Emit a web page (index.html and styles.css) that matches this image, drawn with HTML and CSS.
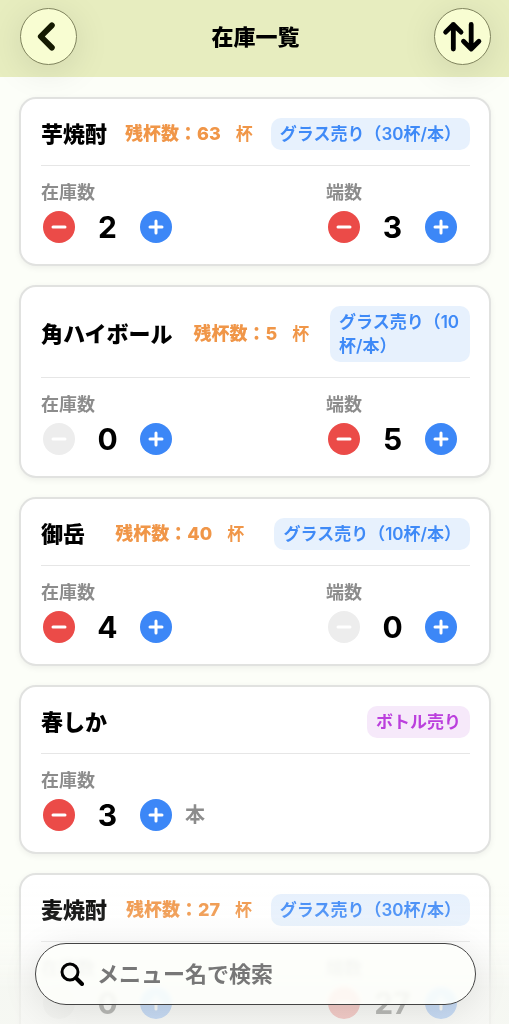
FILE: index.html
```html
<!DOCTYPE html>
<html lang="ja">
<head>
<meta charset="utf-8">
<meta name="viewport" content="width=device-width, initial-scale=1">
<title>在庫一覧</title>
<link rel="stylesheet" href="styles.css">
</head>
<body>
<svg class="sprite" aria-hidden="true">
  <symbol id="minus" viewBox="0 0 32 32"><path d="M10 16h12" fill="none" stroke="#fff" stroke-width="3" stroke-linecap="round"/></symbol>
  <symbol id="plus" viewBox="0 0 32 32"><path d="M10 16h12M16 10v12" fill="none" stroke="#fff" stroke-width="3" stroke-linecap="round"/></symbol>
</svg>
<div class="app">
  <header class="topbar">
    <button class="round" type="button" aria-label="戻る">
      <svg viewBox="0 0 57 57"><path d="M32 17 20.500 28.500 32 40" fill="none" stroke="#151a02" stroke-width="6" stroke-linecap="round" stroke-linejoin="round"/></svg>
    </button>
    <h1 class="title">在庫一覧</h1>
    <button class="round" type="button" aria-label="並べ替え">
      <svg viewBox="0 0 57 57" fill="none" stroke="#000" stroke-width="5" stroke-linecap="round" stroke-linejoin="round"><path d="M19 41.500V16M11 24l8-8 8 8M37.500 16v25.500M29.500 33.500l8 8 8-8"/></svg>
    </button>
  </header>

  <main class="list">
    <article class="card">
      <div class="card-head">
        <h2 class="name">芋焼酎</h2>
        <p class="remain"><strong>残杯数：63</strong><span>杯</span></p>
        <span class="badge">グラス売り（30杯/本）</span>
      </div>
      <div class="counts">
        <section class="count"><h3 class="label">在庫数</h3><div class="stepper">
          <button class="step minus" type="button" aria-label="在庫数を減らす"><svg><use href="#minus"/></svg></button><output class="num">2</output><button class="step plus" type="button" aria-label="在庫数を増やす"><svg><use href="#plus"/></svg></button></div></section>
        <section class="count"><h3 class="label">端数</h3><div class="stepper">
          <button class="step minus" type="button" aria-label="端数を減らす"><svg><use href="#minus"/></svg></button><output class="num">3</output><button class="step plus" type="button" aria-label="端数を増やす"><svg><use href="#plus"/></svg></button></div></section>
      </div>
    </article>

    <article class="card">
      <div class="card-head">
        <h2 class="name">角ハイボール</h2>
        <p class="remain"><strong>残杯数：5</strong><span>杯</span></p>
        <span class="badge badge-wrap">グラス売り（10杯/本）</span>
      </div>
      <div class="counts">
        <section class="count"><h3 class="label">在庫数</h3><div class="stepper">
          <button class="step minus" type="button" aria-label="在庫数を減らす" disabled><svg><use href="#minus"/></svg></button><output class="num">0</output><button class="step plus" type="button" aria-label="在庫数を増やす"><svg><use href="#plus"/></svg></button></div></section>
        <section class="count"><h3 class="label">端数</h3><div class="stepper">
          <button class="step minus" type="button" aria-label="端数を減らす"><svg><use href="#minus"/></svg></button><output class="num">5</output><button class="step plus" type="button" aria-label="端数を増やす"><svg><use href="#plus"/></svg></button></div></section>
      </div>
    </article>

    <article class="card">
      <div class="card-head">
        <h2 class="name">御岳</h2>
        <p class="remain"><strong>残杯数：40</strong><span>杯</span></p>
        <span class="badge">グラス売り（10杯/本）</span>
      </div>
      <div class="counts">
        <section class="count"><h3 class="label">在庫数</h3><div class="stepper">
          <button class="step minus" type="button" aria-label="在庫数を減らす"><svg><use href="#minus"/></svg></button><output class="num">4</output><button class="step plus" type="button" aria-label="在庫数を増やす"><svg><use href="#plus"/></svg></button></div></section>
        <section class="count"><h3 class="label">端数</h3><div class="stepper">
          <button class="step minus" type="button" aria-label="端数を減らす" disabled><svg><use href="#minus"/></svg></button><output class="num">0</output><button class="step plus" type="button" aria-label="端数を増やす"><svg><use href="#plus"/></svg></button></div></section>
      </div>
    </article>

    <article class="card">
      <div class="card-head">
        <h2 class="name">春しか</h2>
        <span class="badge badge-bottle">ボトル売り</span>
      </div>
      <div class="counts">
        <section class="count"><h3 class="label">在庫数</h3><div class="stepper">
          <button class="step minus" type="button" aria-label="在庫数を減らす"><svg><use href="#minus"/></svg></button><output class="num">3</output><button class="step plus" type="button" aria-label="在庫数を増やす"><svg><use href="#plus"/></svg></button><span class="unit">本</span></div></section>
      </div>
    </article>

    <article class="card">
      <div class="card-head">
        <h2 class="name">麦焼酎</h2>
        <p class="remain"><strong>残杯数：27</strong><span>杯</span></p>
        <span class="badge">グラス売り（30杯/本）</span>
      </div>
      <div class="counts">
        <section class="count"><h3 class="label">在庫数</h3><div class="stepper">
          <button class="step minus" type="button" aria-label="在庫数を減らす" disabled><svg><use href="#minus"/></svg></button><output class="num">0</output><button class="step plus" type="button" aria-label="在庫数を増やす"><svg><use href="#plus"/></svg></button></div></section>
        <section class="count"><h3 class="label">端数</h3><div class="stepper">
          <button class="step minus" type="button" aria-label="端数を減らす"><svg><use href="#minus"/></svg></button><output class="num">27</output><button class="step plus" type="button" aria-label="端数を増やす"><svg><use href="#plus"/></svg></button></div></section>
      </div>
    </article>
  </main>

  <div class="dock">
    <form class="search" role="search">
      <svg class="search-icon" viewBox="0 0 24 24" aria-hidden="true"><circle cx="10" cy="10" r="8" fill="none" stroke="#000" stroke-width="3"/><path d="m16 16 6 6" stroke="#000" stroke-width="4" stroke-linecap="round"/></svg>
      <input class="search-input" type="text" placeholder="メニュー名で検索" aria-label="メニュー名で検索">
    </form>
  </div>
</div>
</body>
</html>
```

FILE: styles.css
```css
* { box-sizing: border-box; margin: 0; }

body {
  background: #fcfef8;
  color: #000;
  font-family: Inter, "Noto Sans CJK JP", sans-serif;
  text-spacing-trim: space-all;
}

button { border: 0; padding: 0; font: inherit; }
svg { display: block; }
.sprite { display: none; }

.app {
  display: flex;
  flex-direction: column;
  height: 100vh;
  overflow: hidden;
}

.topbar {
  position: relative;
  z-index: 1;
  display: flex;
  align-items: center;
  justify-content: space-between;
  flex: none;
  padding: 8px 18px 12px 20px;
  background: #e7edbf;
}

.round {
  width: 57px;
  height: 57px;
  border: 1px solid #80845e;
  border-radius: 50%;
  background: #f8fdd2;
  box-shadow: 0 6px 36px rgba(0, 0, 0, 0.1);
}

.round svg { width: 100%; height: 100%; }

.title { font-size: 22px; line-height: 32px; font-weight: 800; }

.list {
  display: flex;
  flex: 1;
  flex-direction: column;
  gap: 19px;
  min-height: 0;
  padding: 20px 18px 100px 19px;
  overflow-y: auto;
  scrollbar-width: none;
}

.card {
  flex: none;
  padding: 19px 19px 21px 20px;
  border: 2px solid #e1e2e0;
  border-radius: 17px;
  background: #fff;
  box-shadow: 0 2px 6px rgba(0, 0, 0, 0.06);
}

.card-head {
  display: flex;
  align-items: center;
  justify-content: space-between;
  padding-bottom: 15px;
  border-bottom: 1px solid #e6e6e6;
}

.name {
  flex: none;
  font-size: 22px;
  line-height: 32px;
  font-weight: 800;
}

.remain {
  display: flex;
  flex: none;
  align-items: center;
  gap: 15px;
  color: #f09648;
  font-size: 17px;
  line-height: 24px;
  font-weight: 600;
}

.remain strong { font-size: 18px; font-weight: 800; }

.badge {
  flex: none;
  padding: 4px 9px;
  border-radius: 10px;
  background: #e7f1fd;
  color: #3f8af7;
  font-size: 17px;
  line-height: 24px;
  font-weight: 600;
}

.badge-wrap { width: 140px; }
.badge-bottle { background: #f6e9fa; color: #bb3fdd; }

.counts {
  display: flex;
  justify-content: space-between;
  padding-top: 15px;
}

.label {
  color: #8c8c8c;
  font-size: 18px;
  line-height: 24px;
  font-weight: 600;
}

.stepper {
  display: flex;
  align-items: center;
  margin-top: 6px;
  padding: 0 13px 0 2px;
}

.step {
  flex: none;
  width: 32px;
  height: 32px;
  border-radius: 50%;
  color: #fff;
}

.step svg { width: 32px; height: 32px; }
.minus { background: #eb4b48; }
.minus:disabled { background: #ededed; }
.plus { background: #3c87f7; }

.num {
  width: 65px;
  font-size: 30px;
  line-height: 32px;
  font-weight: 700;
  text-align: center;
}

.unit {
  margin-left: 13px;
  color: #8c8c8c;
  font-size: 20px;
  line-height: 24px;
  font-weight: 600;
}

.dock {
  position: fixed;
  right: 0;
  bottom: 0;
  left: 0;
  padding: 63px 33px 19px 35px;
  background: linear-gradient(rgba(252, 254, 248, 0), rgba(250, 251, 248, 0.2) 40%, rgba(244, 245, 241, 0.75) 75%);
  pointer-events: none;
}

.search {
  display: flex;
  align-items: center;
  gap: 13px;
  height: 62px;
  padding: 0 24px;
  border: 1px solid #444;
  border-radius: 31px;
  background: rgba(253, 254, 251, 0.88);
  box-shadow: 0 6px 36px rgba(0, 0, 0, 0.1);
  backdrop-filter: blur(2px) saturate(2);
  pointer-events: auto;
}

.search-icon { flex: none; width: 24px; height: 24px; }

.search-input {
  flex: 1;
  min-width: 0;
  padding: 0;
  border: 0;
  outline: 0;
  background: transparent;
  color: #000;
  font: 600 22px/32px Inter, "Noto Sans CJK JP", sans-serif;
}

.search-input::placeholder { color: #777; opacity: 1; }
```
